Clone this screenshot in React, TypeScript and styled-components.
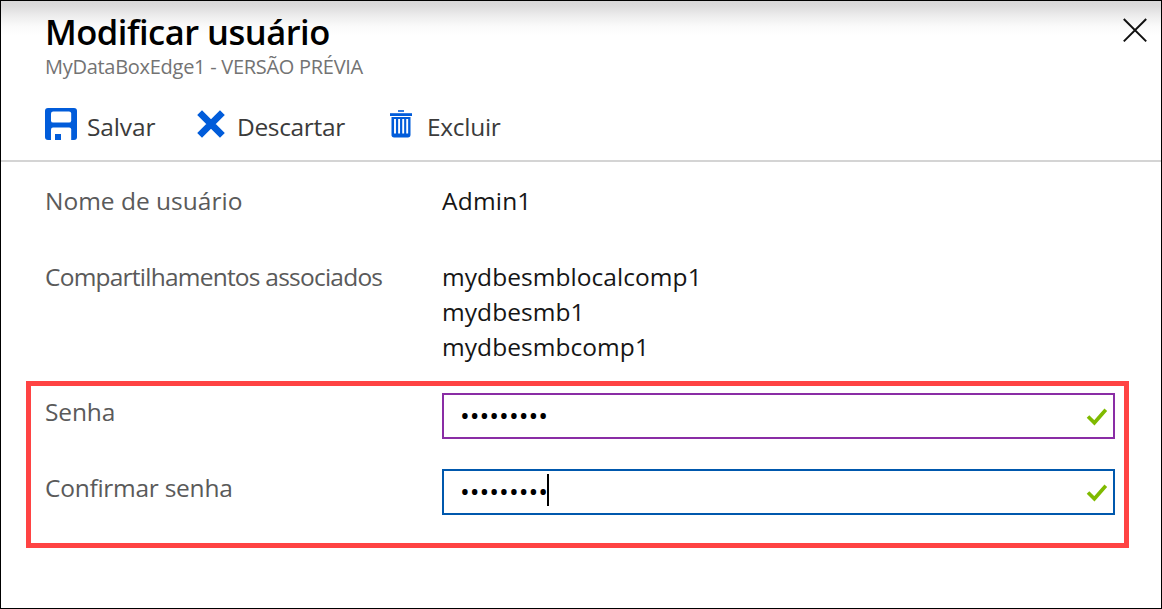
import React from 'react';
import styled, { createGlobalStyle } from 'styled-components';

const GlobalStyle = createGlobalStyle`
  *, *::before, *::after { box-sizing: border-box; }
  body { margin: 0; background: #fff; }
`;

const Blade = styled.main`
  display: flex;
  flex-direction: column;
  width: 1162px;
  height: 609px;
  border: 1px solid #000;
  background: linear-gradient(#d8d7d8 0, #dcdbdc 5px, #ededed 15px, #fafafa 25px, #fff 34px);
  font-family: 'Open Sans', 'Noto Sans', sans-serif;
  font-size: 24.5px;
  overflow: hidden;
`;

const Header = styled.header`
  display: flex;
  justify-content: space-between;
  align-items: flex-start;
  height: 78px;
  padding: 8px 13px 0 44px;
`;

const Title = styled.h1`
  margin: 0;
  font-size: 34.5px;
  font-weight: 600;
  line-height: 45px;
  letter-spacing: -0.5px;
  color: #000;
`;

const Subtitle = styled.div`
  font-size: 20px;
  line-height: 25px;
  letter-spacing: -0.28px;
  color: #737373;
`;

const CloseButton = styled.button`
  display: flex;
  margin-top: 8px;
  padding: 0;
  border: 0;
  background: none;
`;

const Toolbar = styled.nav`
  display: grid;
  grid-template-columns: 152px 193px auto;
  height: 83px;
  padding: 29px 44px 0;
  border-bottom: 2px solid #d4d4d4;
`;

const Command = styled.button<{ $gap: number; $tracking: number }>`
  display: flex;
  align-items: center;
  gap: ${(p) => p.$gap}px;
  height: 32px;
  padding: 0;
  border: 0;
  background: none;
  font: inherit;
  letter-spacing: ${(p) => p.$tracking}px;
  color: #3b3b3b;

  svg { flex: none; }
  span { padding-top: 5px; line-height: 33px; white-space: nowrap; }
`;

const Details = styled.section`
  display: flex;
  flex-direction: column;
  gap: 41px;
  padding: 21px 44px 0;
`;

const Row = styled.div`
  display: grid;
  grid-template-columns: 397px 1fr;
  line-height: 35px;
`;

const Label = styled.div<{ $tracking: number }>`
  letter-spacing: ${(p) => p.$tracking}px;
  color: #5a5a5a;
`;

const Value = styled.div<{ $tracking: number }>`
  letter-spacing: ${(p) => p.$tracking}px;
  color: #161616;
`;

const Highlight = styled.section`
  display: flex;
  flex-direction: column;
  gap: 30px;
  width: 1103px;
  height: 167px;
  margin: 17px 0 0 25px;
  padding: 7px 9px 0 14px;
  border: 5px solid #ff4343;
`;

const FieldRow = styled(Row)`
  height: 46px;

  ${Label} { padding-top: 1px; }
`;

const PasswordBox = styled.div<{ $color: string }>`
  display: flex;
  align-items: center;
  height: 46px;
  padding: 0 5px 0 16px;
  border: 2px solid ${(p) => p.$color};
  background: #fff;
  font-size: 26px;
  line-height: 40px;
  color: #000;

  span { padding-bottom: 2px; }
  svg { margin: 1px 0 0 auto; }
`;

const Caret = styled.i`
  width: 2px;
  height: 32px;
  margin: -4px 0 0 -1px;
  background: #000;
`;

const SaveIcon = () => (
  <svg width="32" height="32" viewBox="0 0 32 32">
    <rect width="32" height="32" rx="3" fill="#015cda" />
    <rect x="6" y="3.4" width="20.2" height="11.2" rx="2.2" fill="#fff" />
    <path d="M6 32V21.5a2 2 0 0 1 2-2h16.2a2 2 0 0 1 2 2V32z" fill="#fff" />
    <rect x="10" y="26" width="6" height="6" fill="#015cda" />
  </svg>
);

const DiscardIcon = () => (
  <svg width="28" height="28" viewBox="0 0 28 28">
    <path d="M2.6 2.6 25.4 25.4M25.4 2.6 2.6 25.4" stroke="#015cda" strokeWidth="6.8" />
  </svg>
);

const TrashIcon = () => (
  <svg width="22" height="28" viewBox="0 0 22 28">
    <path d="M8 1h6" stroke="#015cda" strokeWidth="1.6" />
    <path d="M0 3.2h22v2.8H0z" fill="#015cda" />
    <path d="M1.5 7h19v17.8a2.6 2.6 0 0 1-2.6 2.6H4.1a2.6 2.6 0 0 1-2.6-2.6z" fill="#015cda" />
    <path d="M5 9v14.5M9.1 9v14.5M13.2 9v14.5M17.2 9v14.5" stroke="#fff" strokeWidth="1.9" />
  </svg>
);

const CloseIcon = () => (
  <svg width="26" height="26" viewBox="0 0 26 26">
    <path d="M1.8 2 24.2 24.4M24.2 2 1.8 24.4" stroke="#111" strokeWidth="2" />
  </svg>
);

const ValidIcon = () => (
  <svg width="22" height="20" viewBox="0 0 22 20">
    <path d="M2 9.4 8.4 15.8 19.8 2.8" fill="none" stroke="#7fba00" strokeWidth="3.6" />
  </svg>
);

export default function App() {
  return (
    <>
      <GlobalStyle />
      <Blade>
        <Header>
          <div>
            <Title>Modificar usuário</Title>
            <Subtitle>MyDataBoxEdge1 - VERSÃO PRÉVIA</Subtitle>
          </div>
          <CloseButton aria-label="Fechar"><CloseIcon /></CloseButton>
        </Header>
        <Toolbar>
          <Command $gap={10} $tracking={-0.12}><SaveIcon /><span>Salvar</span></Command>
          <Command $gap={12} $tracking={-0.34}><DiscardIcon /><span>Descartar</span></Command>
          <Command $gap={15} $tracking={-0.3}><TrashIcon /><span>Excluir</span></Command>
        </Toolbar>
        <Details>
          <Row>
            <Label $tracking={0}>Nome de usuário</Label>
            <Value $tracking={0.2}>Admin1</Value>
          </Row>
          <Row>
            <Label $tracking={-0.77}>Compartilhamentos associados</Label>
            <Value $tracking={0.06}>
              <div>mydbesmblocalcomp1</div>
              <div>mydbesmb1</div>
              <div>mydbesmbcomp1</div>
            </Value>
          </Row>
        </Details>
        <Highlight>
          <FieldRow>
            <Label $tracking={-0.15}>Senha</Label>
            <PasswordBox $color="#8a2da5"><span>•••••••••</span><ValidIcon /></PasswordBox>
          </FieldRow>
          <FieldRow>
            <Label $tracking={-0.26}>Confirmar senha</Label>
            <PasswordBox $color="#0058ad"><span>•••••••••</span><Caret /><ValidIcon /></PasswordBox>
          </FieldRow>
        </Highlight>
      </Blade>
    </>
  );
}
